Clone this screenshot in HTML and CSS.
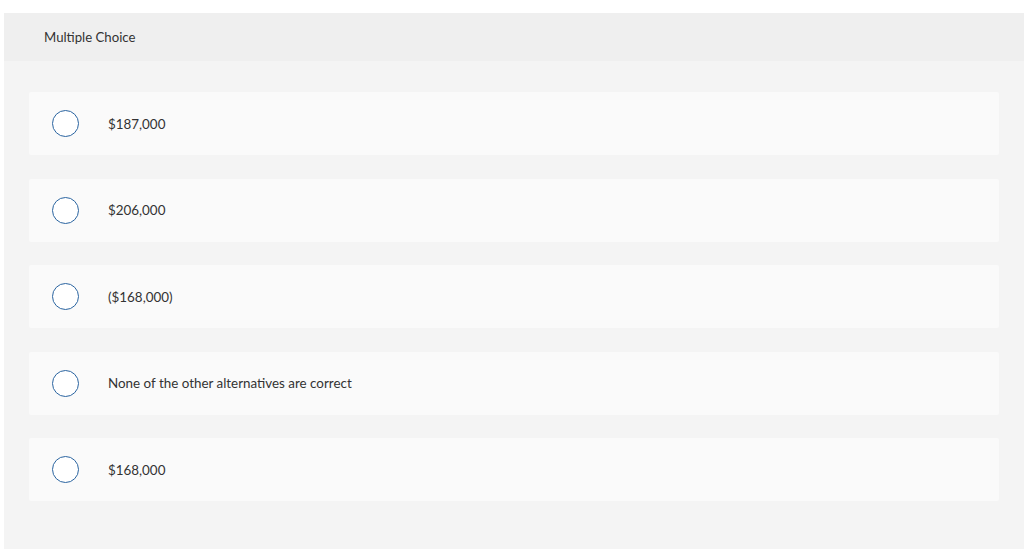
FILE: index.html
```html
<!DOCTYPE html>
<html>
<head>
<meta charset="utf-8">
<link rel="stylesheet" href="styles.css">
</head>
<body>
<div class="question">
  <div class="q-header">Multiple Choice</div>
  <div class="q-body">
    <div class="option"><span class="radio"></span><span class="label">$187,000</span></div>
    <div class="option"><span class="radio"></span><span class="label">$206,000</span></div>
    <div class="option"><span class="radio"></span><span class="label">($168,000)</span></div>
    <div class="option"><span class="radio"></span><span class="label">None of the other alternatives are correct</span></div>
    <div class="option"><span class="radio"></span><span class="label">$168,000</span></div>
  </div>
</div>
</body>
</html>
```
FILE: styles.css
```css
html, body {
  margin: 0;
  padding: 0;
  background: #ffffff;
}
body {
  font-family: "Lato", "Open Sans", sans-serif;
  color: #333333;
  padding: 13px 0 0 4px;
}
.question {
  background: #f4f4f4;
  height: 536px;
}
.q-header {
  background: #efefef;
  height: 48px;
  display: flex;
  align-items: center;
  padding-left: 40px;
  font-size: 13.2px;
}
.q-body {
  display: flex;
  flex-direction: column;
  gap: 23.5px;
  padding: 31px 25px 0 25px;
}
.option {
  background: #fafafa;
  height: 63px;
  border-radius: 2px;
  display: flex;
  align-items: center;
  padding-left: 23px;
}
.radio {
  width: 25px;
  height: 25px;
  border: 1.5px solid #2a64a0;
  border-radius: 50%;
  background: #ffffff;
  flex: none;
}
.label {
  margin-left: 29px;
  font-size: 13.4px;
}
```
